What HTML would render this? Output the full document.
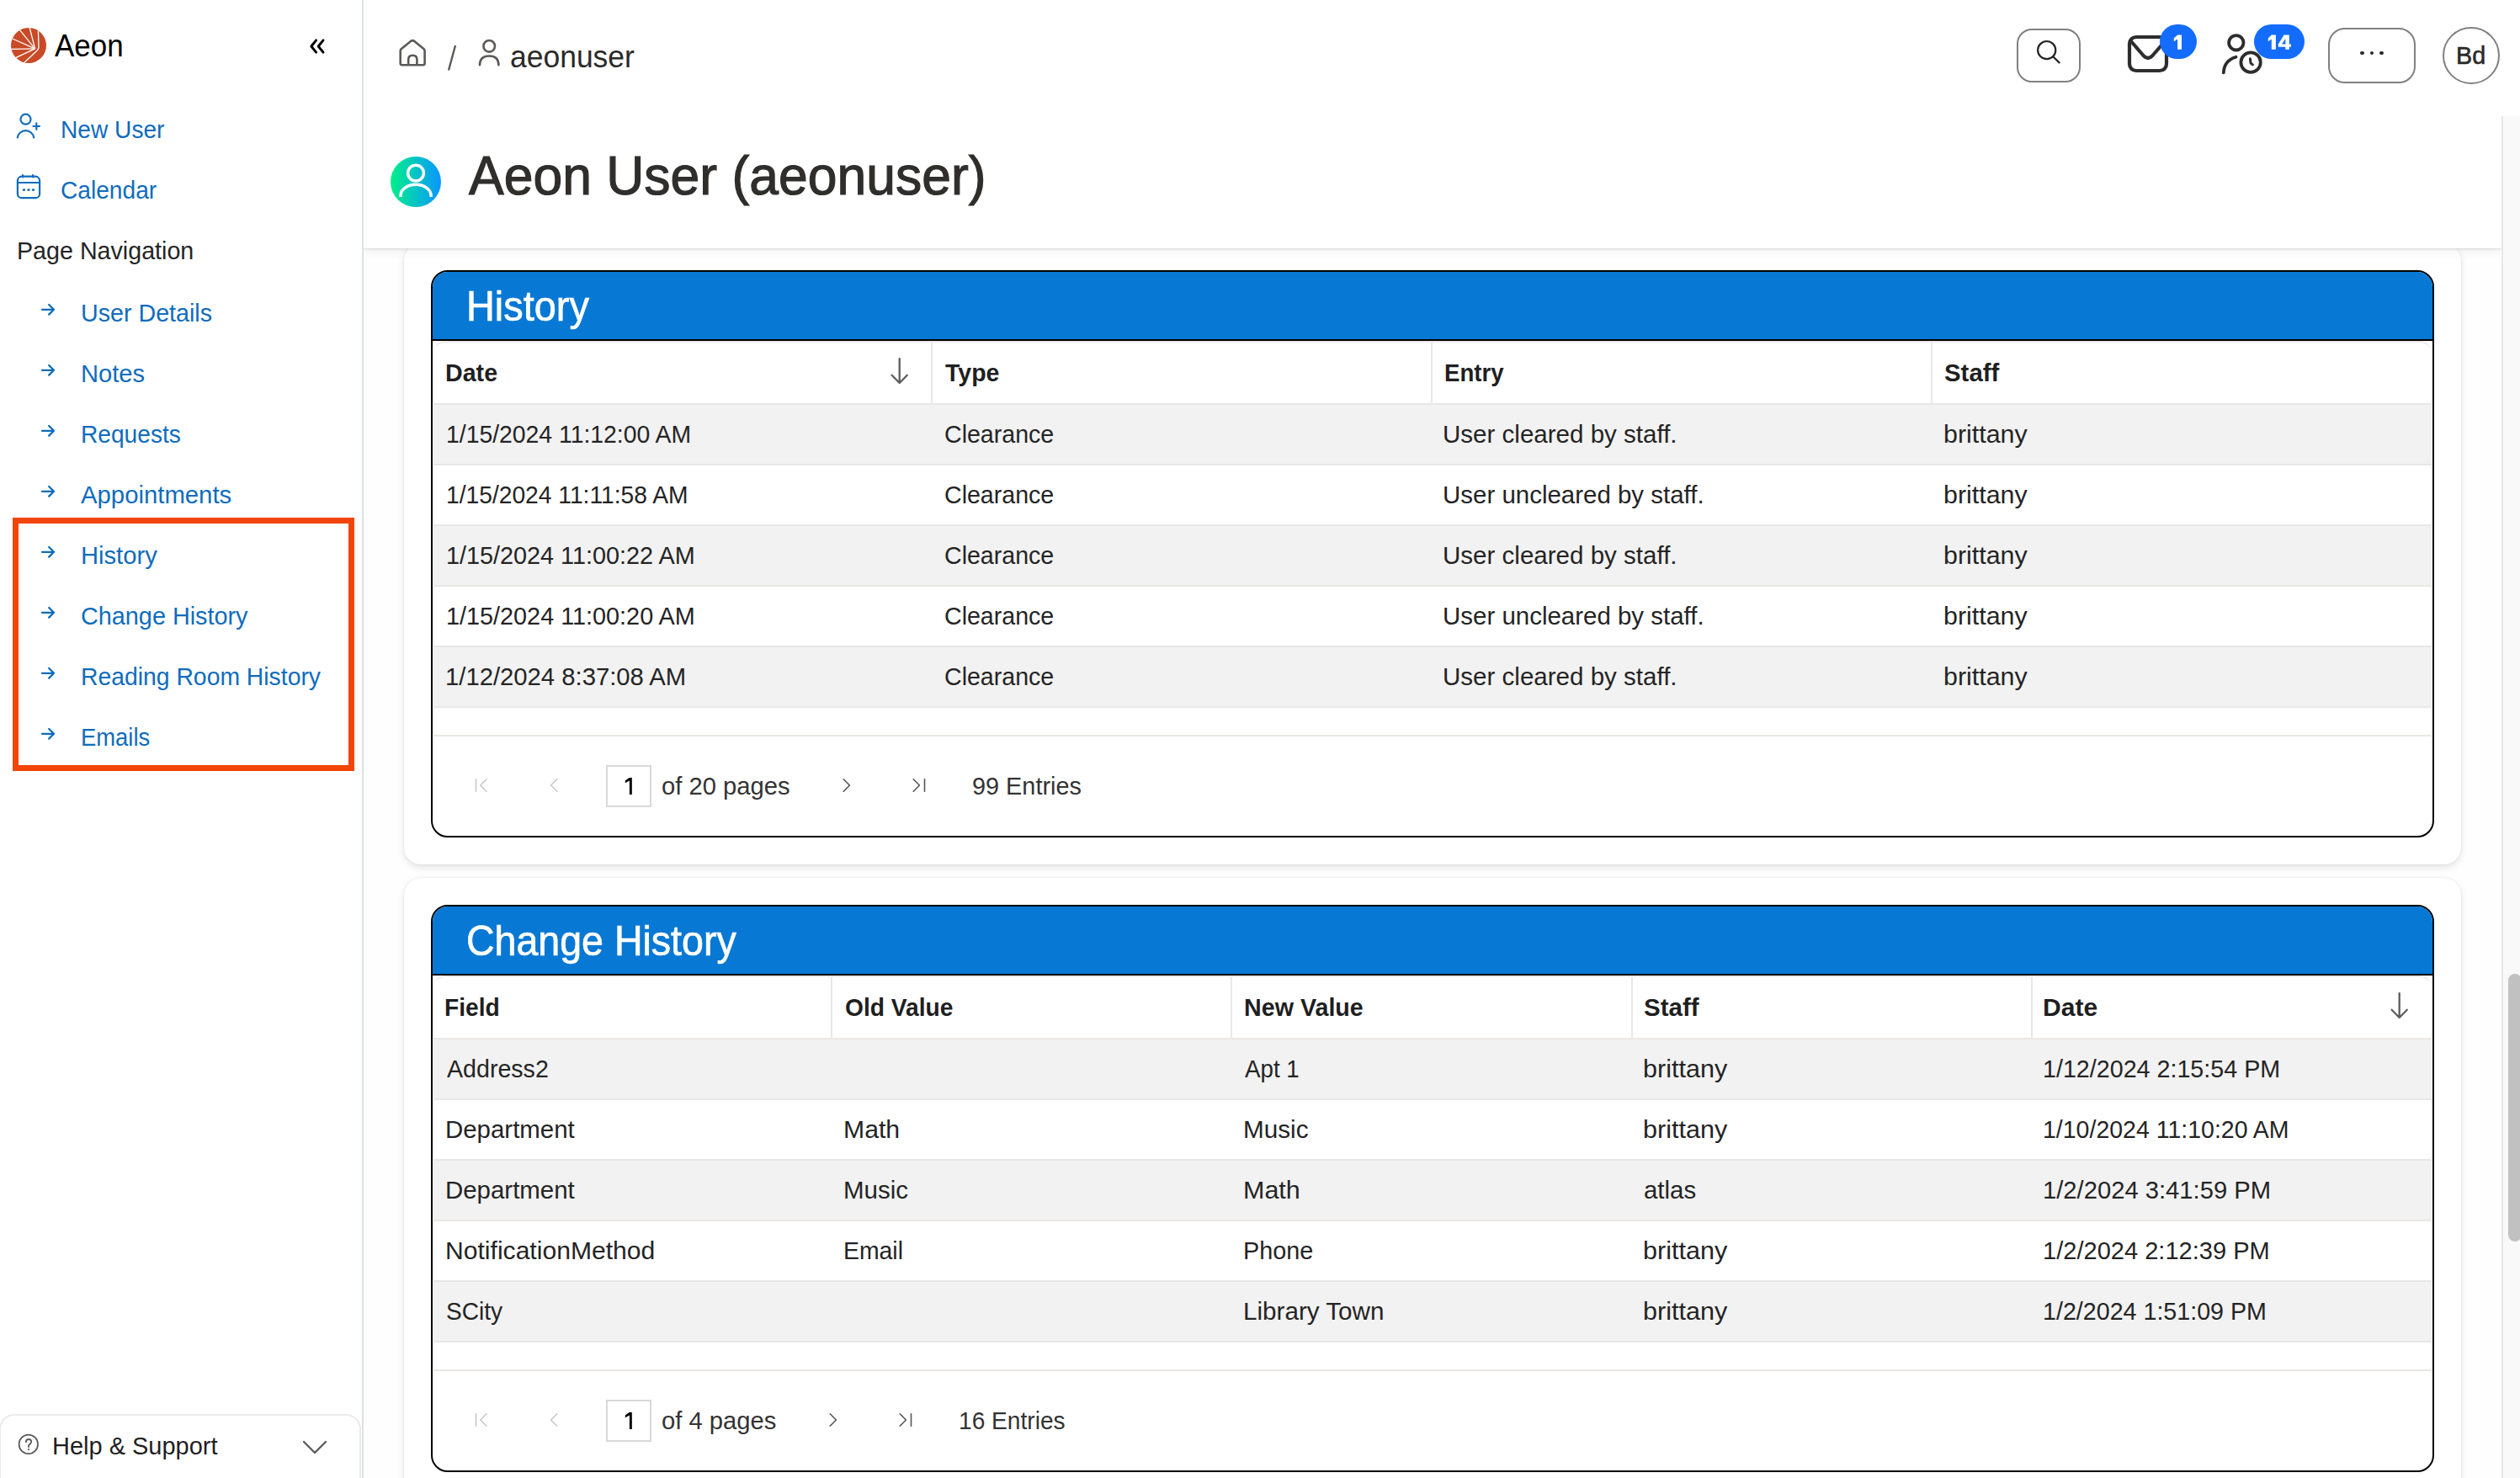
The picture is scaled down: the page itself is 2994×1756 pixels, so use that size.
<!DOCTYPE html><html><head><meta charset="utf-8"><title>Aeon User</title><style>
*{margin:0;padding:0;box-sizing:border-box}
html,body{width:2994px;height:1756px;overflow:hidden;background:#fff}
body{position:relative;font-family:"Liberation Sans",sans-serif;color:#242424}
.t{position:absolute;white-space:nowrap}
.abs{position:absolute}
svg{position:absolute;overflow:visible}
</style></head><body><div class="abs" style="left:0;top:0;width:430px;height:1756px;background:#fff"></div>
<div class="abs" style="left:430px;top:0;width:2px;height:1756px;background:#dde1e6"></div>
<svg style="left:12.6px;top:33px" width="42" height="42" viewBox="0 0 42 42"><circle cx="21" cy="21" r="21" fill="#c94a27"/><line x1="28.6" y1="24.8" x2="22.2" y2="0" stroke="#fff" stroke-width="1.3"/><line x1="28.6" y1="24.8" x2="10.5" y2="2.6" stroke="#fff" stroke-width="1.3"/><line x1="28.6" y1="24.8" x2="1.9" y2="13" stroke="#fff" stroke-width="1.3"/><line x1="28.6" y1="24.8" x2="0.3" y2="25.4" stroke="#fff" stroke-width="1.3"/><line x1="28.6" y1="24.8" x2="5.7" y2="35.6" stroke="#fff" stroke-width="1.3"/><path d="M32.4 3.5 L33 23 Q32.8 26 29 29 L15.9 41.3" fill="none" stroke="#fff" stroke-width="1.3"/></svg>
<div class="t" style="left:64.50px;top:35.57px;font-size:37.2px;line-height:37.2px;color:#000;font-weight:400;transform:scaleX(0.94);transform-origin:0 0;">Aeon</div>
<svg style="left:366px;top:44px" width="24" height="22" viewBox="0 0 24 22"><path d="M9.6 3.8 L3.8 11 L9.6 18.2 M18 3.8 L12.2 11 L18 18.2" fill="none" stroke="#000" stroke-width="2.9" stroke-linecap="round" stroke-linejoin="round"/></svg>
<svg style="left:19px;top:135px" width="30" height="30" viewBox="0 0 30 30"><circle cx="11.5" cy="6.7" r="6" fill="none" stroke="#0f6cbd" stroke-width="2.2"/><path d="M1.8 28.5 A9.8 9.8 0 0 1 21.2 28.5" fill="none" stroke="#0f6cbd" stroke-width="2.2" stroke-linecap="round"/><path d="M24.3 11.3 V18.8 M20.5 15 H28" fill="none" stroke="#0f6cbd" stroke-width="2.2" stroke-linecap="round"/></svg>
<div class="t" style="left:72.00px;top:139.24px;font-size:29.3px;line-height:29.3px;color:#0f6cbd;font-weight:400;transform:scaleX(0.96);transform-origin:0 0;">New User</div>
<svg style="left:19px;top:207px" width="30" height="30" viewBox="0 0 30 30"><rect x="1.9" y="2.7" width="26.2" height="25.5" rx="5" fill="none" stroke="#0f6cbd" stroke-width="2.2"/><path d="M2 10 H28 M8 1 V3.5 M20 1 V3.5" fill="none" stroke="#0f6cbd" stroke-width="2.2" stroke-linecap="round"/><circle cx="9.5" cy="18.5" r="1.6" fill="#0f6cbd"/><circle cx="15" cy="18.5" r="1.6" fill="#0f6cbd"/><circle cx="20.5" cy="18.5" r="1.6" fill="#0f6cbd"/></svg>
<div class="t" style="left:72.00px;top:211.24px;font-size:29.3px;line-height:29.3px;color:#0f6cbd;font-weight:400;transform:scaleX(0.96);transform-origin:0 0;">Calendar</div>
<div class="t" style="left:19.80px;top:283.26px;font-size:29.4px;line-height:29.4px;color:#242424;font-weight:400;transform:scaleX(0.975);transform-origin:0 0;">Page Navigation</div>
<svg style="left:48px;top:360px" width="18" height="15" viewBox="0 0 18 15"><path d="M2 7.8 H16 M10.2 2 L16 7.8 L10.2 13.6" fill="none" stroke="#0f6cbd" stroke-width="2.3" stroke-linecap="round" stroke-linejoin="round"/></svg>
<div class="t" style="left:95.60px;top:357.26px;font-size:29.4px;line-height:29.4px;color:#0f6cbd;font-weight:400;transform:scaleX(0.975);transform-origin:0 0;">User Details</div>
<svg style="left:48px;top:432px" width="18" height="15" viewBox="0 0 18 15"><path d="M2 7.8 H16 M10.2 2 L16 7.8 L10.2 13.6" fill="none" stroke="#0f6cbd" stroke-width="2.3" stroke-linecap="round" stroke-linejoin="round"/></svg>
<div class="t" style="left:95.60px;top:429.26px;font-size:29.4px;line-height:29.4px;color:#0f6cbd;font-weight:400;transform:scaleX(0.99);transform-origin:0 0;">Notes</div>
<svg style="left:48px;top:504px" width="18" height="15" viewBox="0 0 18 15"><path d="M2 7.8 H16 M10.2 2 L16 7.8 L10.2 13.6" fill="none" stroke="#0f6cbd" stroke-width="2.3" stroke-linecap="round" stroke-linejoin="round"/></svg>
<div class="t" style="left:95.60px;top:501.26px;font-size:29.4px;line-height:29.4px;color:#0f6cbd;font-weight:400;transform:scaleX(0.957);transform-origin:0 0;">Requests</div>
<svg style="left:48px;top:576px" width="18" height="15" viewBox="0 0 18 15"><path d="M2 7.8 H16 M10.2 2 L16 7.8 L10.2 13.6" fill="none" stroke="#0f6cbd" stroke-width="2.3" stroke-linecap="round" stroke-linejoin="round"/></svg>
<div class="t" style="left:95.60px;top:573.26px;font-size:29.4px;line-height:29.4px;color:#0f6cbd;font-weight:400;transform:scaleX(0.997);transform-origin:0 0;">Appointments</div>
<svg style="left:48px;top:648px" width="18" height="15" viewBox="0 0 18 15"><path d="M2 7.8 H16 M10.2 2 L16 7.8 L10.2 13.6" fill="none" stroke="#0f6cbd" stroke-width="2.3" stroke-linecap="round" stroke-linejoin="round"/></svg>
<div class="t" style="left:95.60px;top:645.26px;font-size:29.4px;line-height:29.4px;color:#0f6cbd;font-weight:400;transform:scaleX(0.992);transform-origin:0 0;">History</div>
<svg style="left:48px;top:720px" width="18" height="15" viewBox="0 0 18 15"><path d="M2 7.8 H16 M10.2 2 L16 7.8 L10.2 13.6" fill="none" stroke="#0f6cbd" stroke-width="2.3" stroke-linecap="round" stroke-linejoin="round"/></svg>
<div class="t" style="left:95.60px;top:717.26px;font-size:29.4px;line-height:29.4px;color:#0f6cbd;font-weight:400;transform:scaleX(0.98);transform-origin:0 0;">Change History</div>
<svg style="left:48px;top:792px" width="18" height="15" viewBox="0 0 18 15"><path d="M2 7.8 H16 M10.2 2 L16 7.8 L10.2 13.6" fill="none" stroke="#0f6cbd" stroke-width="2.3" stroke-linecap="round" stroke-linejoin="round"/></svg>
<div class="t" style="left:95.60px;top:789.26px;font-size:29.4px;line-height:29.4px;color:#0f6cbd;font-weight:400;transform:scaleX(0.964);transform-origin:0 0;">Reading Room History</div>
<svg style="left:48px;top:864px" width="18" height="15" viewBox="0 0 18 15"><path d="M2 7.8 H16 M10.2 2 L16 7.8 L10.2 13.6" fill="none" stroke="#0f6cbd" stroke-width="2.3" stroke-linecap="round" stroke-linejoin="round"/></svg>
<div class="t" style="left:95.60px;top:861.26px;font-size:29.4px;line-height:29.4px;color:#0f6cbd;font-weight:400;transform:scaleX(0.932);transform-origin:0 0;">Emails</div>
<div class="abs" style="left:15px;top:615px;width:406px;height:301px;border:7px solid #f1450a"></div>
<div class="abs" style="left:-1px;top:1680px;width:430px;height:120px;border:2px solid #ebebeb;border-radius:18px;background:#fff"></div>
<svg style="left:21px;top:1703px" width="26" height="26" viewBox="0 0 26 26"><circle cx="12.8" cy="12.9" r="11.2" fill="none" stroke="#5c5c5c" stroke-width="1.8"/><path d="M9.9 10.2 Q9.9 7 13.1 7 Q16.2 7 16.2 10 Q16.2 11.8 14.2 12.9 Q13 13.6 13 15.2 V16.2" fill="none" stroke="#5c5c5c" stroke-width="1.8" stroke-linecap="round"/><circle cx="13" cy="19.1" r="1.15" fill="#5c5c5c"/></svg>
<div class="t" style="left:61.60px;top:1703.29px;font-size:29.6px;line-height:29.6px;color:#1f1f1f;font-weight:400;transform:scaleX(0.979);transform-origin:0 0;">Help &amp; Support</div>
<svg style="left:359px;top:1711px" width="30" height="18" viewBox="0 0 30 18"><path d="M2 2 L15 15 L28 2" fill="none" stroke="#5c5c5c" stroke-width="2.4" stroke-linecap="round" stroke-linejoin="round"/></svg>
<div class="abs" style="left:432px;top:138px;width:2540px;height:1618px;background:#fefefe"></div>
<div class="abs" style="left:479.5px;top:288.5px;width:2444.5px;height:738.5px;background:#fff;border-radius:20px;box-shadow:0 0 2px rgba(0,0,0,0.12),0 4px 8px rgba(0,0,0,0.10)"></div>
<div class="abs" style="left:479.5px;top:1042.5px;width:2444.5px;height:760px;background:#fff;border-radius:20px;box-shadow:0 0 2px rgba(0,0,0,0.12),0 4px 8px rgba(0,0,0,0.10)"></div>
<div class="abs" style="left:512px;top:321px;width:2380px;height:674px;border:2px solid #000;border-radius:20px;background:#fff;overflow:hidden"><div class="abs" style="left:0;top:0;width:2376px;height:82px;background:#0778d4;border-bottom:2px solid #000"></div></div>
<div class="t" style="left:553.50px;top:338.77px;font-size:49.5px;line-height:49.5px;color:#fff;font-weight:400;transform:scaleX(0.947);transform-origin:0 0;-webkit-text-stroke:0.7px #fff">History</div>
<div class="abs" style="left:515px;top:405px;width:2374px;height:74px;background:#fff;border-top:2px solid #ebebeb;border-radius:14px 14px 0 0"></div>
<div class="t" style="left:529.10px;top:428.95px;font-size:28.7px;line-height:28.7px;color:#1f1f1f;font-weight:700;transform:scaleX(0.9982);transform-origin:0 0;">Date</div>
<div class="abs" style="left:1106.00px;top:407px;width:2px;height:72px;background:#e8e8e8"></div>
<svg style="left:1056.50px;top:424px" width="24" height="34" viewBox="0 0 24 34"><path d="M11.7 2.1 V31 M2.6 21.8 L11.7 31 L20.8 21.8" fill="none" stroke="#5c5c5c" stroke-width="2.3" stroke-linecap="round" stroke-linejoin="round"/></svg>
<div class="t" style="left:1122.70px;top:428.95px;font-size:28.7px;line-height:28.7px;color:#1f1f1f;font-weight:700;transform:scaleX(0.9946);transform-origin:0 0;">Type</div>
<div class="abs" style="left:1700.00px;top:407px;width:2px;height:72px;background:#e8e8e8"></div>
<div class="t" style="left:1716.03px;top:428.95px;font-size:28.7px;line-height:28.7px;color:#1f1f1f;font-weight:700;transform:scaleX(0.9625);transform-origin:0 0;">Entry</div>
<div class="abs" style="left:2294.00px;top:407px;width:2px;height:72px;background:#e8e8e8"></div>
<div class="t" style="left:2309.76px;top:428.95px;font-size:28.7px;line-height:28.7px;color:#1f1f1f;font-weight:700;transform:scaleX(1.0247);transform-origin:0 0;">Staff</div>
<div class="abs" style="left:515px;top:479px;width:2374px;height:2px;background:#eae8e6"></div>
<div class="abs" style="left:515px;top:481px;width:2374px;height:72px;background:#f2f2f2;border-bottom:2px solid #eae8e6"></div>
<div class="t" style="left:529.54px;top:502.00px;font-size:29px;line-height:29px;color:#242424;font-weight:400;transform:scaleX(0.9775);transform-origin:0 0;">1/15/2024 11:12:00 AM</div>
<div class="t" style="left:1121.53px;top:502.00px;font-size:29px;line-height:29px;color:#242424;font-weight:400;transform:scaleX(0.9853);transform-origin:0 0;">Clearance</div>
<div class="t" style="left:1714.46px;top:502.00px;font-size:29px;line-height:29px;color:#242424;font-weight:400;transform:scaleX(1.0186);transform-origin:0 0;">User cleared by staff.</div>
<div class="t" style="left:2308.64px;top:502.00px;font-size:29px;line-height:29px;color:#242424;font-weight:400;transform:scaleX(1.0481);transform-origin:0 0;">brittany</div>
<div class="abs" style="left:515px;top:553px;width:2374px;height:72px;background:#fff;border-bottom:2px solid #eae8e6"></div>
<div class="t" style="left:529.55px;top:574.00px;font-size:29px;line-height:29px;color:#242424;font-weight:400;transform:scaleX(0.9724);transform-origin:0 0;">1/15/2024 11:11:58 AM</div>
<div class="t" style="left:1121.53px;top:574.00px;font-size:29px;line-height:29px;color:#242424;font-weight:400;transform:scaleX(0.9853);transform-origin:0 0;">Clearance</div>
<div class="t" style="left:1714.47px;top:574.00px;font-size:29px;line-height:29px;color:#242424;font-weight:400;transform:scaleX(1.0158);transform-origin:0 0;">User uncleared by staff.</div>
<div class="t" style="left:2308.64px;top:574.00px;font-size:29px;line-height:29px;color:#242424;font-weight:400;transform:scaleX(1.0481);transform-origin:0 0;">brittany</div>
<div class="abs" style="left:515px;top:625px;width:2374px;height:72px;background:#f2f2f2;border-bottom:2px solid #eae8e6"></div>
<div class="t" style="left:529.51px;top:646.00px;font-size:29px;line-height:29px;color:#242424;font-weight:400;transform:scaleX(0.993);transform-origin:0 0;">1/15/2024 11:00:22 AM</div>
<div class="t" style="left:1121.53px;top:646.00px;font-size:29px;line-height:29px;color:#242424;font-weight:400;transform:scaleX(0.9853);transform-origin:0 0;">Clearance</div>
<div class="t" style="left:1714.46px;top:646.00px;font-size:29px;line-height:29px;color:#242424;font-weight:400;transform:scaleX(1.0186);transform-origin:0 0;">User cleared by staff.</div>
<div class="t" style="left:2308.64px;top:646.00px;font-size:29px;line-height:29px;color:#242424;font-weight:400;transform:scaleX(1.0481);transform-origin:0 0;">brittany</div>
<div class="abs" style="left:515px;top:697px;width:2374px;height:72px;background:#fff;border-bottom:2px solid #eae8e6"></div>
<div class="t" style="left:529.52px;top:718.00px;font-size:29px;line-height:29px;color:#242424;font-weight:400;transform:scaleX(0.9934);transform-origin:0 0;">1/15/2024 11:00:20 AM</div>
<div class="t" style="left:1121.53px;top:718.00px;font-size:29px;line-height:29px;color:#242424;font-weight:400;transform:scaleX(0.9853);transform-origin:0 0;">Clearance</div>
<div class="t" style="left:1714.47px;top:718.00px;font-size:29px;line-height:29px;color:#242424;font-weight:400;transform:scaleX(1.0158);transform-origin:0 0;">User uncleared by staff.</div>
<div class="t" style="left:2308.64px;top:718.00px;font-size:29px;line-height:29px;color:#242424;font-weight:400;transform:scaleX(1.0481);transform-origin:0 0;">brittany</div>
<div class="abs" style="left:515px;top:769px;width:2374px;height:72px;background:#f2f2f2;border-bottom:2px solid #eae8e6"></div>
<div class="t" style="left:529.49px;top:790.00px;font-size:29px;line-height:29px;color:#242424;font-weight:400;transform:scaleX(1.0085);transform-origin:0 0;">1/12/2024 8:37:08 AM</div>
<div class="t" style="left:1121.53px;top:790.00px;font-size:29px;line-height:29px;color:#242424;font-weight:400;transform:scaleX(0.9853);transform-origin:0 0;">Clearance</div>
<div class="t" style="left:1714.46px;top:790.00px;font-size:29px;line-height:29px;color:#242424;font-weight:400;transform:scaleX(1.0186);transform-origin:0 0;">User cleared by staff.</div>
<div class="t" style="left:2308.64px;top:790.00px;font-size:29px;line-height:29px;color:#242424;font-weight:400;transform:scaleX(1.0481);transform-origin:0 0;">brittany</div>
<div class="abs" style="left:515px;top:873px;width:2374px;height:2px;background:#eae8e6"></div>
<svg style="left:564px;top:924px" width="18" height="18" viewBox="0 0 18 18"><path d="M1.5 1.8 V16.2 M14 1.8 L6.8 9 L14 16.2" fill="none" stroke="#c8c8c8" stroke-width="1.6" stroke-linecap="round" stroke-linejoin="round"/></svg>
<svg style="left:652px;top:924px" width="12" height="18" viewBox="0 0 12 18"><path d="M9.8 1.8 L2.6 9 L9.8 16.2" fill="none" stroke="#c8c8c8" stroke-width="1.6" stroke-linecap="round" stroke-linejoin="round"/></svg>
<div class="abs" style="left:720px;top:909px;width:54px;height:50px;border:2px solid #d9d9d9;background:#fff"></div>
<svg style="left:740px;top:920px" width="14" height="26" viewBox="0 0 14 26"><path d="M10.8 4 V23.9 H7.9 V7.6 L2.8 10.3 V7.5 L7.6 4 Z" fill="#000"/></svg>
<div class="t" style="left:786.00px;top:918.59px;font-size:29.6px;line-height:29.6px;color:#333;font-weight:400;transform:scaleX(0.986);transform-origin:0 0;">of 20 pages</div>
<svg style="left:1000.2px;top:924px" width="12" height="18" viewBox="0 0 12 18"><path d="M2.2 1.8 L9.4 9 L2.2 16.2" fill="none" stroke="#555" stroke-width="1.6" stroke-linecap="round" stroke-linejoin="round"/></svg>
<svg style="left:1083.2px;top:924px" width="18" height="18" viewBox="0 0 18 18"><path d="M2.2 1.8 L9.4 9 L2.2 16.2 M15.5 1.8 V16.2" fill="none" stroke="#555" stroke-width="1.6" stroke-linecap="round" stroke-linejoin="round"/></svg>
<div class="t" style="left:1155.20px;top:918.59px;font-size:29.6px;line-height:29.6px;color:#333;font-weight:400;transform:scaleX(0.975);transform-origin:0 0;">99 Entries</div>
<div class="abs" style="left:512px;top:1075px;width:2380px;height:674px;border:2px solid #000;border-radius:20px;background:#fff;overflow:hidden"><div class="abs" style="left:0;top:0;width:2376px;height:82px;background:#0778d4;border-bottom:2px solid #000"></div></div>
<div class="t" style="left:553.50px;top:1092.77px;font-size:49.5px;line-height:49.5px;color:#fff;font-weight:400;transform:scaleX(0.94);transform-origin:0 0;-webkit-text-stroke:0.7px #fff">Change History</div>
<div class="abs" style="left:515px;top:1159px;width:2374px;height:74px;background:#fff;border-top:2px solid #ebebeb;border-radius:14px 14px 0 0"></div>
<div class="t" style="left:528.10px;top:1182.95px;font-size:28.7px;line-height:28.7px;color:#1f1f1f;font-weight:700;transform:scaleX(0.9824);transform-origin:0 0;">Field</div>
<div class="abs" style="left:987.20px;top:1161px;width:2px;height:72px;background:#e8e8e8"></div>
<div class="t" style="left:1003.51px;top:1182.95px;font-size:28.7px;line-height:28.7px;color:#1f1f1f;font-weight:700;transform:scaleX(0.9823);transform-origin:0 0;">Old Value</div>
<div class="abs" style="left:1462.40px;top:1161px;width:2px;height:72px;background:#e8e8e8"></div>
<div class="t" style="left:1478.30px;top:1182.95px;font-size:28.7px;line-height:28.7px;color:#1f1f1f;font-weight:700;transform:scaleX(0.9992);transform-origin:0 0;">New Value</div>
<div class="abs" style="left:1937.60px;top:1161px;width:2px;height:72px;background:#e8e8e8"></div>
<div class="t" style="left:1952.94px;top:1182.95px;font-size:28.7px;line-height:28.7px;color:#1f1f1f;font-weight:700;transform:scaleX(1.0293);transform-origin:0 0;">Staff</div>
<div class="abs" style="left:2412.80px;top:1161px;width:2px;height:72px;background:#e8e8e8"></div>
<div class="t" style="left:2427.22px;top:1182.95px;font-size:28.7px;line-height:28.7px;color:#1f1f1f;font-weight:700;transform:scaleX(1.0479);transform-origin:0 0;">Date</div>
<svg style="left:2838.50px;top:1178px" width="24" height="34" viewBox="0 0 24 34"><path d="M11.7 2.1 V31 M2.6 21.8 L11.7 31 L20.8 21.8" fill="none" stroke="#5c5c5c" stroke-width="2.3" stroke-linecap="round" stroke-linejoin="round"/></svg>
<div class="abs" style="left:515px;top:1233px;width:2374px;height:2px;background:#eae8e6"></div>
<div class="abs" style="left:515px;top:1235px;width:2374px;height:72px;background:#f2f2f2;border-bottom:2px solid #eae8e6"></div>
<div class="t" style="left:530.70px;top:1255.99px;font-size:29px;line-height:29px;color:#242424;font-weight:400;transform:scaleX(0.9862);transform-origin:0 0;">Address2</div>
<div class="t" style="left:1479.38px;top:1255.99px;font-size:29px;line-height:29px;color:#242424;font-weight:400;transform:scaleX(0.9569);transform-origin:0 0;">Apt 1</div>
<div class="t" style="left:1951.51px;top:1255.99px;font-size:29px;line-height:29px;color:#242424;font-weight:400;transform:scaleX(1.0533);transform-origin:0 0;">brittany</div>
<div class="t" style="left:2427.32px;top:1255.99px;font-size:29px;line-height:29px;color:#242424;font-weight:400;transform:scaleX(0.9886);transform-origin:0 0;">1/12/2024 2:15:54 PM</div>
<div class="abs" style="left:515px;top:1307px;width:2374px;height:72px;background:#fff;border-bottom:2px solid #eae8e6"></div>
<div class="t" style="left:528.65px;top:1327.99px;font-size:29px;line-height:29px;color:#242424;font-weight:400;transform:scaleX(1.0146);transform-origin:0 0;">Department</div>
<div class="t" style="left:1001.82px;top:1327.99px;font-size:29px;line-height:29px;color:#242424;font-weight:400;transform:scaleX(1.0413);transform-origin:0 0;">Math</div>
<div class="t" style="left:1477.35px;top:1327.99px;font-size:29px;line-height:29px;color:#242424;font-weight:400;transform:scaleX(1.0244);transform-origin:0 0;">Music</div>
<div class="t" style="left:1951.51px;top:1327.99px;font-size:29px;line-height:29px;color:#242424;font-weight:400;transform:scaleX(1.0533);transform-origin:0 0;">brittany</div>
<div class="t" style="left:2427.32px;top:1327.99px;font-size:29px;line-height:29px;color:#242424;font-weight:400;transform:scaleX(0.9826);transform-origin:0 0;">1/10/2024 11:10:20 AM</div>
<div class="abs" style="left:515px;top:1379px;width:2374px;height:72px;background:#f2f2f2;border-bottom:2px solid #eae8e6"></div>
<div class="t" style="left:528.65px;top:1399.99px;font-size:29px;line-height:29px;color:#242424;font-weight:400;transform:scaleX(1.0146);transform-origin:0 0;">Department</div>
<div class="t" style="left:1001.88px;top:1399.99px;font-size:29px;line-height:29px;color:#242424;font-weight:400;transform:scaleX(1.0164);transform-origin:0 0;">Music</div>
<div class="t" style="left:1477.31px;top:1399.99px;font-size:29px;line-height:29px;color:#242424;font-weight:400;transform:scaleX(1.0509);transform-origin:0 0;">Math</div>
<div class="t" style="left:1952.58px;top:1399.99px;font-size:29px;line-height:29px;color:#242424;font-weight:400;transform:scaleX(1.0135);transform-origin:0 0;">atlas</div>
<div class="t" style="left:2427.30px;top:1399.99px;font-size:29px;line-height:29px;color:#242424;font-weight:400;transform:scaleX(1.0065);transform-origin:0 0;">1/2/2024 3:41:59 PM</div>
<div class="abs" style="left:515px;top:1451px;width:2374px;height:72px;background:#fff;border-bottom:2px solid #eae8e6"></div>
<div class="t" style="left:528.62px;top:1471.99px;font-size:29px;line-height:29px;color:#242424;font-weight:400;transform:scaleX(1.038);transform-origin:0 0;">NotificationMethod</div>
<div class="t" style="left:1001.94px;top:1471.99px;font-size:29px;line-height:29px;color:#242424;font-weight:400;transform:scaleX(0.9783);transform-origin:0 0;">Email</div>
<div class="t" style="left:1477.44px;top:1471.99px;font-size:29px;line-height:29px;color:#242424;font-weight:400;transform:scaleX(0.9928);transform-origin:0 0;">Phone</div>
<div class="t" style="left:1951.51px;top:1471.99px;font-size:29px;line-height:29px;color:#242424;font-weight:400;transform:scaleX(1.0533);transform-origin:0 0;">brittany</div>
<div class="t" style="left:2427.28px;top:1471.99px;font-size:29px;line-height:29px;color:#242424;font-weight:400;transform:scaleX(1.002);transform-origin:0 0;">1/2/2024 2:12:39 PM</div>
<div class="abs" style="left:515px;top:1523px;width:2374px;height:72px;background:#f2f2f2;border-bottom:2px solid #eae8e6"></div>
<div class="t" style="left:529.73px;top:1543.99px;font-size:29px;line-height:29px;color:#242424;font-weight:400;transform:scaleX(0.9692);transform-origin:0 0;">SCity</div>
<div class="t" style="left:1477.38px;top:1543.99px;font-size:29px;line-height:29px;color:#242424;font-weight:400;transform:scaleX(1.0217);transform-origin:0 0;">Library Town</div>
<div class="t" style="left:1951.51px;top:1543.99px;font-size:29px;line-height:29px;color:#242424;font-weight:400;transform:scaleX(1.0533);transform-origin:0 0;">brittany</div>
<div class="t" style="left:2427.32px;top:1543.99px;font-size:29px;line-height:29px;color:#242424;font-weight:400;transform:scaleX(0.9877);transform-origin:0 0;">1/2/2024 1:51:09 PM</div>
<div class="abs" style="left:515px;top:1627px;width:2374px;height:2px;background:#eae8e6"></div>
<svg style="left:564px;top:1678px" width="18" height="18" viewBox="0 0 18 18"><path d="M1.5 1.8 V16.2 M14 1.8 L6.8 9 L14 16.2" fill="none" stroke="#c8c8c8" stroke-width="1.6" stroke-linecap="round" stroke-linejoin="round"/></svg>
<svg style="left:652px;top:1678px" width="12" height="18" viewBox="0 0 12 18"><path d="M9.8 1.8 L2.6 9 L9.8 16.2" fill="none" stroke="#c8c8c8" stroke-width="1.6" stroke-linecap="round" stroke-linejoin="round"/></svg>
<div class="abs" style="left:720px;top:1663px;width:54px;height:50px;border:2px solid #d9d9d9;background:#fff"></div>
<svg style="left:740px;top:1674px" width="14" height="26" viewBox="0 0 14 26"><path d="M10.8 4 V23.9 H7.9 V7.6 L2.8 10.3 V7.5 L7.6 4 Z" fill="#000"/></svg>
<div class="t" style="left:786.00px;top:1672.59px;font-size:29.6px;line-height:29.6px;color:#333;font-weight:400;transform:scaleX(0.986);transform-origin:0 0;">of 4 pages</div>
<svg style="left:984.2px;top:1678px" width="12" height="18" viewBox="0 0 12 18"><path d="M2.2 1.8 L9.4 9 L2.2 16.2" fill="none" stroke="#555" stroke-width="1.6" stroke-linecap="round" stroke-linejoin="round"/></svg>
<svg style="left:1067.2px;top:1678px" width="18" height="18" viewBox="0 0 18 18"><path d="M2.2 1.8 L9.4 9 L2.2 16.2 M15.5 1.8 V16.2" fill="none" stroke="#555" stroke-width="1.6" stroke-linecap="round" stroke-linejoin="round"/></svg>
<div class="t" style="left:1139.20px;top:1672.59px;font-size:29.6px;line-height:29.6px;color:#333;font-weight:400;transform:scaleX(0.95);transform-origin:0 0;">16 Entries</div>
<div class="abs" style="left:432px;top:0;width:2540px;height:295px;background:#fff;box-shadow:0 1px 3px rgba(0,0,0,0.12),0 4px 12px rgba(0,0,0,0.06);clip-path:inset(0 0 -30px 0)"></div>
<div class="abs" style="left:432px;top:0;width:2562px;height:138px;background:#fff"></div>
<svg style="left:473px;top:46px" width="34" height="34" viewBox="0 0 34 34"><path d="M2.7 14.5 Q2.7 13 3.9 12 L15 2.9 Q17.15 1.3 19.3 2.9 L30.4 12 Q31.6 13 31.6 14.5 V29.3 Q31.6 31.3 29.6 31.3 H4.7 Q2.7 31.3 2.7 29.3 Z" fill="none" stroke="#5c5a58" stroke-width="2.6" stroke-linejoin="round"/><path d="M12.2 31 V24.8 Q12.2 19.7 17.3 19.7 Q22.4 19.7 22.4 24.8 V31" fill="none" stroke="#5c5a58" stroke-width="2.6"/></svg>
<svg style="left:530px;top:53px" width="14" height="32" viewBox="0 0 14 32"><path d="M11 1 L3 30.5" fill="none" stroke="#5c5a58" stroke-width="2.4"/></svg>
<svg style="left:568px;top:46px" width="27" height="34" viewBox="0 0 27 34"><circle cx="13.2" cy="8.8" r="6.8" fill="none" stroke="#5c5a58" stroke-width="2.6"/><path d="M2 31.3 Q2 20.5 13.2 20.5 Q24.4 20.5 24.4 31.3" fill="none" stroke="#5c5a58" stroke-width="2.6" stroke-linecap="round"/></svg>
<div class="t" style="left:605.50px;top:49.24px;font-size:37.7px;line-height:37.7px;color:#2b2a28;font-weight:400;transform:scaleX(0.941);transform-origin:0 0;">aeonuser</div>
<div class="abs" style="left:2396px;top:34px;width:76px;height:64px;border:2px solid #808080;border-radius:18px;background:#fff"></div>
<svg style="left:2418px;top:46px" width="34" height="34" viewBox="0 0 34 34"><circle cx="13.7" cy="13.6" r="10.6" fill="none" stroke="#242424" stroke-width="2.2"/><path d="M21.3 21.3 L28.6 28.4" fill="none" stroke="#242424" stroke-width="2.2" stroke-linecap="round"/></svg>
<svg style="left:2526px;top:40px" width="52" height="48" viewBox="0 0 52 48"><rect x="4" y="4" width="44" height="40" rx="8" fill="none" stroke="#2d2d2d" stroke-width="4.2"/><path d="M5 8 L21 26.5 Q26 31.5 31 26.5 L47 8" fill="none" stroke="#2d2d2d" stroke-width="4.2" stroke-linejoin="round"/></svg>
<div class="abs" style="left:2566px;top:29px;width:44px;height:41px;border-radius:22px;background:#136cfe"></div>
<svg style="left:2580px;top:40px" width="14" height="20" viewBox="0 0 14 20"><path d="M7.1 1.6 H12 V18.8 H7.1 V6.6 L2.8 9.2 V5.3 Q5 3.7 7.1 1.6 Z" fill="#fff"/></svg>
<svg style="left:2638px;top:38px" width="52" height="52" viewBox="0 0 52 52"><circle cx="18.8" cy="12.8" r="8.7" fill="none" stroke="#2d2d2d" stroke-width="3.8"/><path d="M3.8 48.3 Q4.5 34 18.5 29.8" fill="none" stroke="#2d2d2d" stroke-width="3.8" stroke-linecap="round"/><circle cx="36.1" cy="36.1" r="11.7" fill="#fff" stroke="#2d2d2d" stroke-width="3.8"/><path d="M35.4 31.8 L36 36.8 L38.4 38.8" fill="none" stroke="#2d2d2d" stroke-width="3" stroke-linecap="round" stroke-linejoin="round"/></svg>
<div class="abs" style="left:2678px;top:29px;width:60px;height:41px;border-radius:21px;background:#136cfe"></div>
<svg style="left:2690px;top:40px" width="34" height="20" viewBox="0 0 34 20"><path fill-rule="evenodd" d="M8.8 1.6 H13.9 V18.8 H8.8 V6.6 L4.8 9.2 V5.3 Q6.8 3.7 8.8 1.6 Z M23.6 1.6 H29.8 V12.4 H31.9 V15.8 H29.8 V18.8 H25.3 V15.8 H16.8 V12.6 Z M25.4 6 L21 12.4 H25.4 Z" fill="#fff"/></svg>
<div class="abs" style="left:2766px;top:33px;width:104px;height:66px;border:2px solid #808080;border-radius:20px;background:#fff"></div>
<div class="abs" style="left:2804.0px;top:60.7px;width:4.6px;height:4.6px;border-radius:50%;background:#2a2a2a"></div>
<div class="abs" style="left:2815.7px;top:60.7px;width:4.6px;height:4.6px;border-radius:50%;background:#2a2a2a"></div>
<div class="abs" style="left:2827.4px;top:60.7px;width:4.6px;height:4.6px;border-radius:50%;background:#2a2a2a"></div>
<div class="abs" style="left:2902px;top:32px;width:68px;height:68px;border:2px solid #808080;border-radius:50%;background:#fff"></div>
<div class="t" style="left:2917.50px;top:50.54px;font-size:29.3px;line-height:29.3px;color:#2a2a2a;font-weight:400;transform:scaleX(0.98);transform-origin:0 0;-webkit-text-stroke:0.6px #2a2a2a">Bd</div>
<svg style="left:464px;top:185.5px" width="60" height="60" viewBox="0 0 60 60"><defs><linearGradient id="ag" x1="0" y1="0" x2="1" y2="0"><stop offset="0" stop-color="#00f08a"/><stop offset="1" stop-color="#0a96ff"/></linearGradient></defs><circle cx="30" cy="30" r="30" fill="url(#ag)"/><circle cx="30" cy="19.6" r="9.4" fill="none" stroke="#fff" stroke-width="3.4"/><path d="M11.9 48 L11.9 46.5 A18.1 13.2 0 0 1 48.1 46.5 L48.1 48" fill="none" stroke="#fff" stroke-width="3.4"/></svg>
<div class="t" style="left:557.00px;top:176.92px;font-size:64px;line-height:64px;color:#302e2c;font-weight:400;transform:scaleX(0.976);transform-origin:0 0;-webkit-text-stroke:1.2px #302e2c">Aeon User (aeonuser)</div>
<div class="abs" style="left:2972px;top:138px;width:22px;height:1618px;background:#f9f9f9;border-left:2px solid #e8e8e8"></div>
<div class="abs" style="left:2980px;top:1157px;width:16px;height:318px;border-radius:8px;background:#c1c1c1"></div></body></html>
